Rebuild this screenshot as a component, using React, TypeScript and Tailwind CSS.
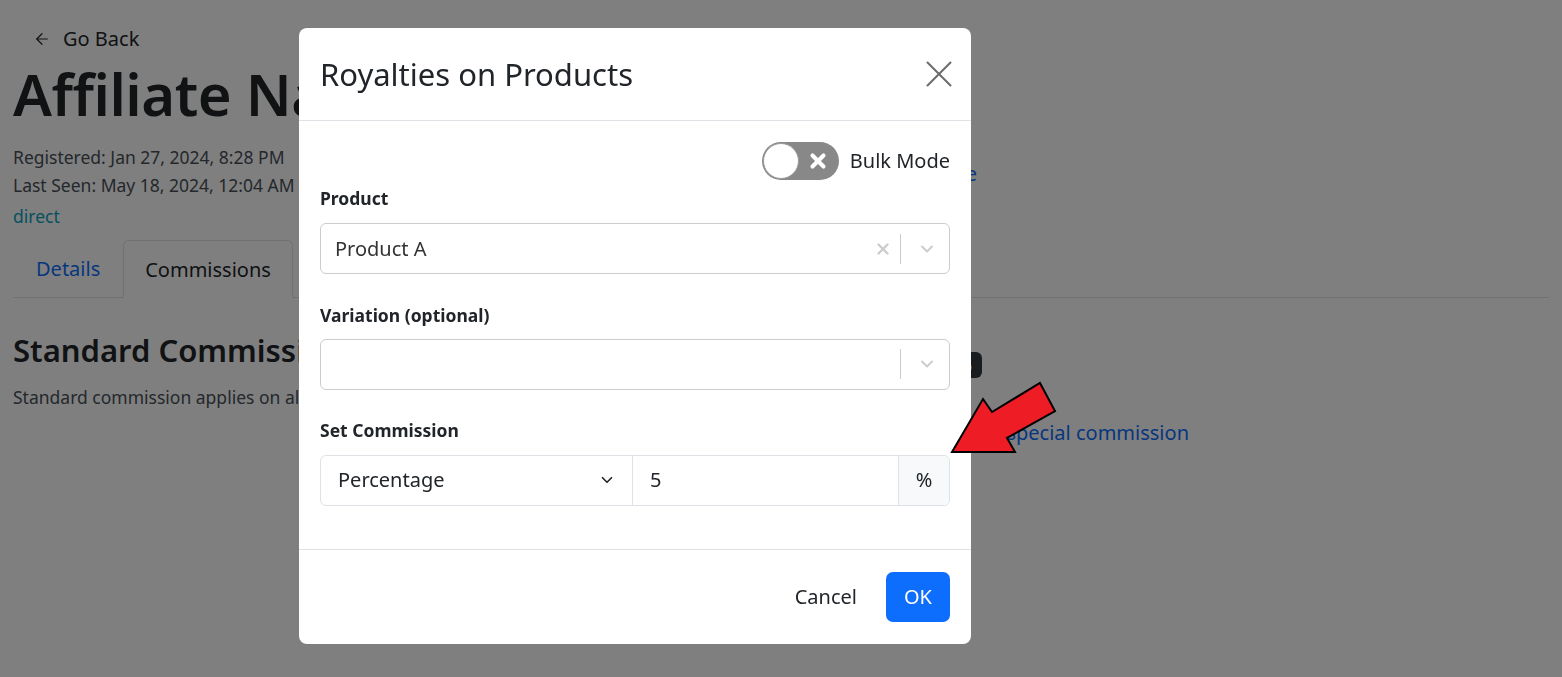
import { ArrowLeft, X, ChevronDown } from "lucide-react";

const font = { fontFamily: '"Noto Sans", "Open Sans", sans-serif' };

function BackgroundPage() {
  return (
    <div className="px-[13px] pt-[24px] text-[#212529]">
      <a className="ml-[20px] inline-flex items-center gap-[12px] text-[20px] text-[#212529]">
        <ArrowLeft size={18} strokeWidth={1.6} />
        <span>Go Back</span>
      </a>
      <div className="grid">
        <div className="col-start-1 row-start-1">
          <h1 className="mt-[5px] text-[58px] font-semibold leading-[1.2] tracking-[-0.5px]">Affiliate Name</h1>
          <div className="mt-[14px] text-[17.5px] leading-[28px] text-[#495057]">
            <div>Registered: Jan 27, 2024, 8:28 PM</div>
            <div>Last Seen: May 18, 2024, 12:04 AM</div>
          </div>
          <div className="mt-[4px] text-[17.5px] text-[#0aa2c0]">direct</div>
        </div>
        <div className="col-start-1 row-start-1 w-[964px] pt-[105px] text-right text-[20px] text-[#0d6efd]">
          Edit profile
        </div>
      </div>
      <div className="mt-[11px] flex border-b border-[#dee2e6] text-[20px]">
        <div className="px-[23px] pt-[14px] pb-[12px] text-[#0d6efd]">Details</div>
        <div className="-mb-px rounded-t-[6px] border border-b-white border-[#dee2e6] bg-white px-[21px] pt-[14px] pb-[12px]">
          Commissions
        </div>
      </div>
      <div className="mt-[34px] grid">
        <div className="col-start-1 row-start-1">
          <h2 className="text-[31px] font-semibold leading-[1.2]">Standard Commission</h2>
          <p className="mt-[15px] text-[17.5px] text-[#495057]">Standard commission applies on all products</p>
        </div>
        <div className="col-start-1 row-start-1 w-[1176px] pt-[20px] text-right">
          <div className="pr-[207px]">
            <span className="inline-block rounded-[6px] bg-[#343a40] px-[10px] py-[1px] text-[16px] font-bold text-white">
              5%
            </span>
          </div>
          <div className="mt-[40px] text-[20px] text-[#0d6efd]">+ Add special commission</div>
        </div>
      </div>
    </div>
  );
}

function SelectBox({ value, clearable }: { value?: string; clearable?: boolean }) {
  return (
    <div className="flex h-[51px] items-center rounded-[6px] border border-[#cccccc] bg-white">
      <div className="flex-1 pl-[14px] text-[20px] text-[#333333]">{value}</div>
      {clearable && (
        <div className="flex w-[26px] justify-center text-[#cccccc]">
          <X size={18} strokeWidth={3.2} />
        </div>
      )}
      <div className="mx-[4px] h-[30px] w-px bg-[#cccccc]" />
      <div className="flex w-[44px] justify-center text-[#cccccc]">
        <ChevronDown size={20} strokeWidth={2.4} />
      </div>
    </div>
  );
}

function Modal() {
  return (
    <div className="fixed inset-0 pl-[299px] pt-[28px]">
      <div className="w-[672px] overflow-hidden rounded-[8px] bg-white text-[#212529]">
        <div className="flex h-[93px] items-center justify-between border-b border-[#dee2e6] px-[21px]">
          <h5 className="text-[31px] leading-none">Royalties on Products</h5>
          <X size={46} strokeWidth={1.05} className="-mr-[12px] text-[#6c6c6c]" />
        </div>
        <div className="px-[21px] pt-[21px] pb-[43px]">
          <div className="flex items-center justify-end gap-[11px]">
            <div className="relative h-[38px] w-[77px] rounded-full bg-[#888888]">
              <div className="absolute left-[1px] top-[1px] h-[36px] w-[36px] rounded-full border border-[#999] bg-white" />
              <div className="absolute right-[10px] top-[8px] text-white">
                <X size={22} strokeWidth={4.5} />
              </div>
            </div>
            <span className="text-[20px]">Bulk Mode</span>
          </div>
          <label className="mt-[5px] block text-[17.5px] font-bold">Product</label>
          <div className="mt-[12px]">
            <SelectBox value="Product A" clearable />
          </div>
          <label className="mt-[28px] block text-[17.5px] font-bold">Variation (optional)</label>
          <div className="mt-[10px]">
            <SelectBox />
          </div>
          <label className="mt-[27px] block text-[17.5px] font-bold">Set Commission</label>
          <div className="mt-[12px] flex h-[51px] rounded-[6px] border border-[#dee2e6]">
            <div className="flex w-[312px] items-center justify-between border-r border-[#dee2e6] pl-[17px] pr-[16px] text-[20px]">
              <span>Percentage</span>
              <ChevronDown size={18} strokeWidth={2.2} />
            </div>
            <div className="flex flex-1 items-center pl-[17px] text-[20px]">5</div>
            <div className="flex w-[51px] items-center justify-center rounded-r-[6px] border-l border-[#dee2e6] bg-[#f8f9fa] text-[20px]">
              %
            </div>
          </div>
        </div>
        <div className="flex items-center justify-end gap-[29px] border-t border-[#dee2e6] px-[21px] pt-[22px] pb-[22px]">
          <button className="text-[20px] text-[#212529]">Cancel</button>
          <button className="h-[50px] rounded-[7px] bg-[#0d6efd] px-[18px] text-[20px] text-white">OK</button>
        </div>
      </div>
    </div>
  );
}

function RedArrow() {
  return (
    <svg className="fixed left-[945px] top-[380px]" width="120" height="80" viewBox="0 0 120 80">
      <polygon
        points="95,3 110,31 62,58 70,72 7,72 38,19 47,32"
        fill="#ee1c25"
        stroke="#000"
        strokeWidth="2"
        strokeLinejoin="miter"
      />
    </svg>
  );
}

export default function App() {
  return (
    <div className="relative h-[677px] w-full overflow-hidden bg-white" style={font}>
      <BackgroundPage />
      <div className="fixed inset-0 bg-black/50" />
      <Modal />
      <RedArrow />
    </div>
  );
}
